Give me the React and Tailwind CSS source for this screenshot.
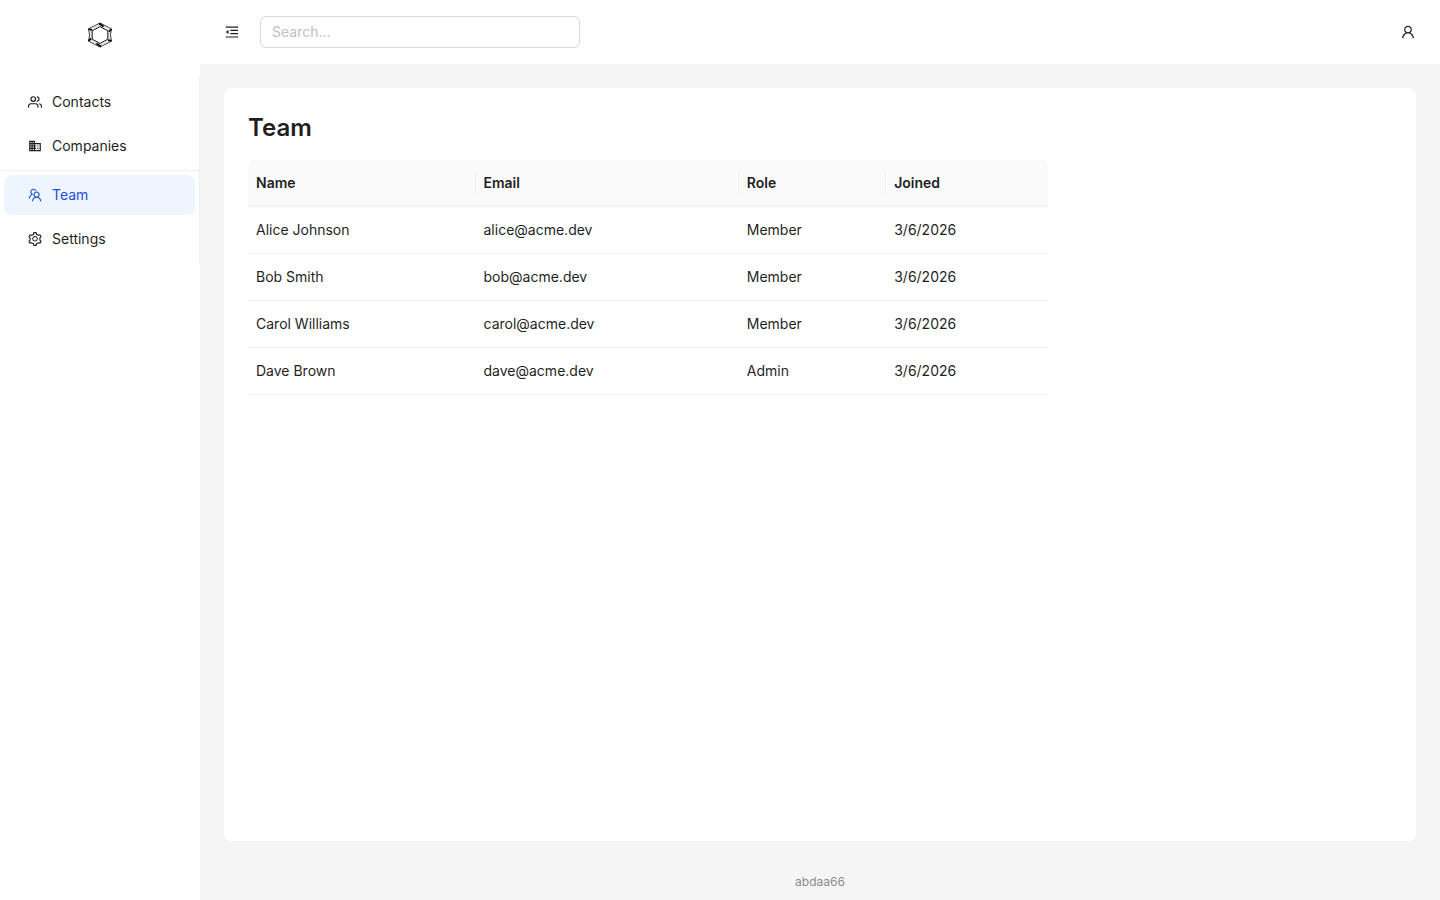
import React from 'react';
import { AiOutlineMenuFold, AiOutlineUser, AiOutlineTeam, AiOutlineSetting } from 'react-icons/ai';
import { FiUsers } from 'react-icons/fi';
import { MdBusiness } from 'react-icons/md';

const members = [
  { name: 'Alice Johnson', email: 'alice@acme.dev', role: 'Member', joined: '3/6/2026' },
  { name: 'Bob Smith', email: 'bob@acme.dev', role: 'Member', joined: '3/6/2026' },
  { name: 'Carol Williams', email: 'carol@acme.dev', role: 'Member', joined: '3/6/2026' },
  { name: 'Dave Brown', email: 'dave@acme.dev', role: 'Admin', joined: '3/6/2026' },
];

function Logo() {
  return (
    <svg width="28" height="28" viewBox="0 0 28 28" fill="none" stroke="#000">
      <path d="M14 3.4 23.6 8.6v10.8L14 24.6 4.4 19.4V8.6z" stroke="#e5e5e5" strokeWidth="3" />
      <path d="M14 2 25.6 7.8 24.4 14l1.2 6.2L14 26 2.4 20.2 3.6 14 2.4 7.8z" strokeWidth="0.7" />
      <path d="M14 5.6 21.8 9.8v8.4L14 22.4l-7.8-4.2V9.8z" strokeWidth="0.9" />
      <path d="M13 2.6l4.6 2.8M25.4 8.2l-2.6 2.4M25.4 19.8l-3.4-.6M15 25.4l-4.6-2.8M2.6 19.8l2.6-2.4M2.6 8.2l3.4.6" strokeWidth="1.7" />
    </svg>
  );
}

function MenuItem({ icon: Icon, size = 14, label, active }) {
  return (
    <a
      href="#"
      className={
        'mx-1 my-1 h-10 pl-6 flex items-center gap-2.5 rounded-lg ' +
        (active ? 'bg-[#edf6ff] text-[#1d4ed8]' : 'text-[#1f1f1f]')
      }
    >
      <span className="w-3.5 flex justify-center">
        <Icon size={size} className="shrink-0" />
      </span>
      <span>{label}</span>
    </a>
  );
}

function Sidebar() {
  return (
    <aside className="w-[200px] shrink-0 bg-white">
      <div className="h-[78px] pt-[21px] flex justify-center items-start">
        <Logo />
      </div>
      <nav className="border-r border-[#f0f0f0] flow-root">
        <MenuItem icon={FiUsers} label="Contacts" />
        <MenuItem icon={MdBusiness} label="Companies" />
        <div className="border-t border-[#f0f0f0]" />
        <MenuItem icon={AiOutlineTeam} size={16} label="Team" active />
        <MenuItem icon={AiOutlineSetting} size={16} label="Settings" />
      </nav>
    </aside>
  );
}

function HeadCell({ children, last }) {
  return (
    <th className="h-[47px] p-0 border-b border-[#f0f0f0] text-left font-semibold">
      <div className={'h-[22px] px-2 flex items-center ' + (last ? '' : 'border-r border-[#f0f0f0]')}>{children}</div>
    </th>
  );
}

function TeamTable() {
  return (
    <table className="w-[800px] table-fixed border-separate border-spacing-0">
      <colgroup>
        <col className="w-[227.5px]" />
        <col className="w-[263.3px]" />
        <col className="w-[147.4px]" />
        <col />
      </colgroup>
      <thead className="bg-[#fafafa]">
        <tr className="[&>th:first-child]:rounded-tl-lg [&>th:last-child]:rounded-tr-lg">
          <HeadCell>Name</HeadCell>
          <HeadCell>Email</HeadCell>
          <HeadCell>Role</HeadCell>
          <HeadCell last>Joined</HeadCell>
        </tr>
      </thead>
      <tbody>
        {members.map(m => (
          <tr key={m.email} className="[&>td]:h-[47px] [&>td]:px-2 [&>td]:py-0 [&>td]:border-b [&>td]:border-[#f0f0f0]">
            <td>{m.name}</td>
            <td>{m.email}</td>
            <td>{m.role}</td>
            <td>{m.joined}</td>
          </tr>
        ))}
      </tbody>
    </table>
  );
}

export default function App() {
  return (
    <div className="h-screen flex bg-[#f5f5f5] text-[#1f1f1f] text-sm leading-[22px] font-['Inter',sans-serif]">
      <Sidebar />
      <div className="flex-1 flex flex-col">
        <header className="h-16 px-6 bg-white flex items-center">
          <button className="mr-5">
            <AiOutlineMenuFold size={16} />
          </button>
          <input
            type="text"
            placeholder="Search..."
            className="w-80 h-8 px-[11px] pb-0.5 border border-[#d9d9d9] rounded-md placeholder:text-[#bfbfbf] outline-none"
          />
          <button className="ml-auto">
            <AiOutlineUser size={16} />
          </button>
        </header>
        <main className="h-[753px] m-6 mb-0 p-6 bg-white rounded-lg">
          <h1 className="mb-4 text-2xl leading-8 font-semibold">Team</h1>
          <TeamTable />
        </main>
        <footer className="flex-1 pt-[30px] text-center text-xs leading-[22px] text-[#8c8c8c]">abdaa66</footer>
      </div>
    </div>
  );
}
